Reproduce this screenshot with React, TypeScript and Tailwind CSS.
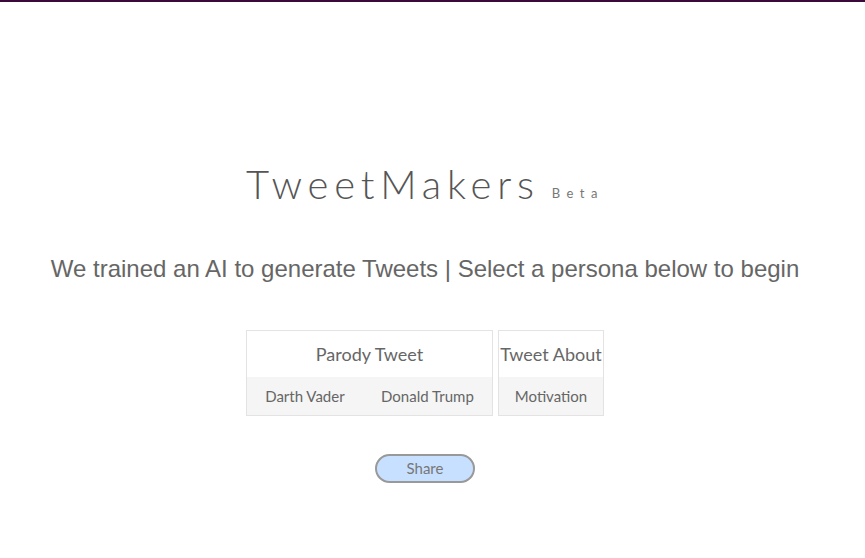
export default function App() {
  return (
    <div className="min-h-[558px] bg-white font-['Lato',sans-serif] text-[#666]">
      <div className="h-[2px] bg-[#3b0a3d]" />
      <main className="pr-[15px]">
        <header className="pt-[158px] flex justify-center items-end">
          <h1 className="text-[40px] font-light tracking-[5.8px] leading-[48px] text-[#555]">TweetMakers</h1>
          <span className="ml-[12px] mb-[5px] text-[13px] tracking-[0.5em] text-[#777]">Beta</span>
        </header>
        <p className="mt-[46px] text-center font-['Liberation_Sans',Arial,sans-serif] text-[24px] leading-[30px]">
          We trained an AI to generate Tweets | Select a persona below to begin
        </p>
        <div className="mt-[46px] flex justify-center gap-[5px]">
          <div className="w-[247px] border border-[#e3e3e3]">
            <div className="h-[46px] flex items-center justify-center text-[18px]">Parody Tweet</div>
            <div className="h-[38px] bg-[#f5f5f5] flex items-center justify-around text-[15px]">
              <span>Darth Vader</span>
              <span>Donald Trump</span>
            </div>
          </div>
          <div className="w-[106px] border border-[#e3e3e3]">
            <div className="h-[46px] flex items-center justify-center text-[18px] whitespace-nowrap">Tweet About</div>
            <div className="h-[38px] bg-[#f5f5f5] flex items-center justify-center text-[15px]">Motivation</div>
          </div>
        </div>
        <div className="mt-[38px] flex justify-center">
          <button className="w-[100px] h-[29px] rounded-full border-2 border-[#999] bg-[#c8e0ff] text-[15px] text-[#777]">
            Share
          </button>
        </div>
      </main>
    </div>
  );
}
